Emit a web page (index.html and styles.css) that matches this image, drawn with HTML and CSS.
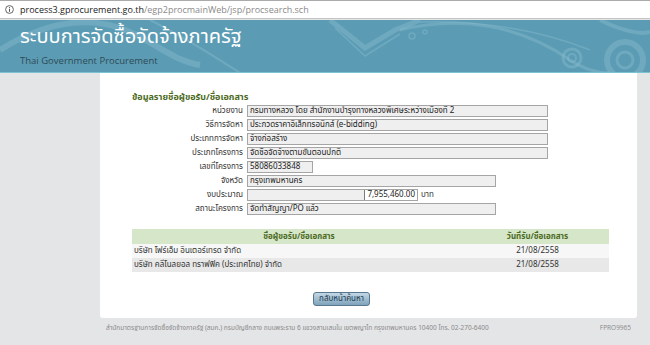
FILE: index.html
```html
<!DOCTYPE html>
<html lang="th">
<head>
    <meta charset="UTF-8">
    <title>ระบบการจัดซื้อจัดจ้างภาครัฐ</title>
    <link rel="stylesheet" href="styles.css">
</head>
<body>

    <div class="urlbar">
        <svg class="info-icon" width="9" height="9" viewBox="0 0 9 9">
            <circle cx="4.5" cy="4.5" r="3.9" fill="none" stroke="#555" stroke-width="0.9"/>
            <rect x="4" y="3.8" width="1" height="3" fill="#555"/>
            <rect x="4" y="2.1" width="1" height="1" fill="#555"/>
        </svg>
        <span class="url-host">process3.gprocurement.go.th</span><span class="url-path">/egp2procmainWeb/jsp/procsearch.sch</span>
    </div>

    <div class="header">
        <svg class="header-pattern" width="650" height="53" viewBox="0 0 650 53">
            <g fill="none" stroke="#8cbfd0" stroke-opacity="0.4">
                <path d="M0 30 C40 5 80 -5 120 8 C150 18 170 40 200 45" stroke-width="6"/>
                <path d="M150 0 C190 20 220 40 240 53" stroke-width="2"/>
                <path d="M330 0 L365 28 L395 10 L420 0" stroke-width="5"/>
                <path d="M335 8 L365 36 L400 14" stroke-width="1.5"/>
                <path d="M400 10 C460 -5 520 5 570 40 C585 50 600 53 610 53" stroke-width="3"/>
                <path d="M420 2 C480 0 540 10 590 30" stroke-width="1.5"/>
                <circle cx="572" cy="38" r="9" stroke-width="3"/>
                <circle cx="572" cy="38" r="4" stroke-width="2"/>
                <circle cx="625" cy="40" r="18" stroke-width="6"/>
                <circle cx="625" cy="40" r="8" stroke-width="3"/>
                <path d="M600 0 C620 10 640 15 650 12" stroke-width="4"/>
                <circle cx="412" cy="16" r="3" stroke-width="1.5"/>
                <circle cx="425" cy="12" r="2" stroke-width="1.5"/>
            </g>
        </svg>
        <div class="header-title">ระบบการจัดซื้อจัดจ้างภาครัฐ</div>
        <div class="header-sub">Thai Government Procurement</div>
    </div>

    <div class="panel">
        <div class="section-title">ข้อมูลรายชื่อผู้ขอรับ/ชื่อเอกสาร</div>

        <div class="form">
            <div class="label">หน่วยงาน</div>
            <div class="value"><span class="field field-wide">กรมทางหลวง โดย สำนักงานบำรุงทางหลวงพิเศษระหว่างเมืองที่ 2</span></div>

            <div class="label">วิธีการจัดหา</div>
            <div class="value"><span class="field field-wide">ประกวดราคาอิเล็กทรอนิกส์ (e-bidding)</span></div>

            <div class="label">ประเภทการจัดหา</div>
            <div class="value"><span class="field field-wide">จ้างก่อสร้าง</span></div>

            <div class="label">ประเภทโครงการ</div>
            <div class="value"><span class="field field-wide">จัดซื้อจัดจ้างตามขั้นตอนปกติ</span></div>

            <div class="label">เลขที่โครงการ</div>
            <div class="value"><span class="field field-short">58086033848</span></div>

            <div class="label">จังหวัด</div>
            <div class="value"><span class="field field-mid">กรุงเทพมหานคร</span></div>

            <div class="label">งบประมาณ</div>
            <div class="value"><span class="field field-money"><span class="money-pad"></span><span class="money">7,955,460.00</span></span><span class="unit">บาท</span></div>

            <div class="label">สถานะโครงการ</div>
            <div class="value"><span class="field field-mid">จัดทำสัญญา/PO แล้ว</span></div>
        </div>

        <table class="result">
            <thead>
                <tr>
                    <th class="col-name">ชื่อผู้ขอรับ/ชื่อเอกสาร</th>
                    <th class="col-date">วันที่รับ/ชื่อเอกสาร</th>
                </tr>
            </thead>
            <tbody>
                <tr class="row-odd">
                    <td>บริษัท โฟร์เอ็ม อินเตอร์เทรด จำกัด</td>
                    <td class="date">21/08/2558</td>
                </tr>
                <tr class="row-even">
                    <td>บริษัท คลีโนลยอล ทราฟฟิค (ประเทศไทย) จำกัด</td>
                    <td class="date">21/08/2558</td>
                </tr>
            </tbody>
        </table>

        <div class="actions">
            <button class="btn-back">กลับหน้าค้นหา</button>
        </div>
    </div>

    <div class="footer">
        <span>สำนักมาตรฐานการจัดซื้อจัดจ้างภาครัฐ (สมก.) กรมบัญชีกลาง ถนนพระราม 6 แขวงสามเสนใน เขตพญาไท กรุงเทพมหานคร 10400 โทร. 02-270-6400</span>
        <span class="footer-code">FPRO9965</span>
    </div>

</body>
</html>
```

FILE: styles.css
```css
* {
    box-sizing: border-box;
}

html, body {
    margin: 0;
    height: 100%;
}

body {
    background: #e4e5e7;
    font-family: Tahoma, "Noto Sans Thai", "Noto Sans", "DejaVu Sans", sans-serif;
    font-size: 8px;
    color: #333;
    overflow: hidden;
}

/*--------------------
Browser bar
--------------------*/
.urlbar {
    height: 19px;
    background: #fff;
    border-top: 1px solid #aaa;
    border-bottom: 1px solid #c4c4c4;
    display: flex;
    align-items: center;
    padding-left: 5px;
    font-family: "Open Sans", sans-serif;
    font-size: 9px;
}

.info-icon {
    margin-right: 6px;
}

.url-host {
    color: #222;
}

.url-path {
    color: #8a8a8a;
}

/*--------------------
Header
--------------------*/
.header {
    position: relative;
    margin-top: 1px;
    height: 53px;
    background: #5b9cb4;
    border-bottom: 1px solid #7cc3d2;
    overflow: hidden;
    padding: 4px 0 0 20px;
}

.header-pattern {
    position: absolute;
    top: 0;
    left: 0;
}

.header-title {
    position: relative;
    color: #fff;
    font-size: 20px;
    line-height: 26px;
}

.header-sub {
    position: relative;
    color: #2e4a56;
    font-family: "Open Sans", sans-serif;
    font-size: 9.5px;
    margin-top: 4px;
}

/*--------------------
Panel
--------------------*/
.panel {
    margin-left: 100px;
    width: 537px;
    height: 245px;
    background: #fff;
    border-radius: 0 0 3px 3px;
    padding: 17px 0 0 32px;
}

.section-title {
    color: #4b6a22;
    font-weight: bold;
    font-size: 9px;
    margin-bottom: 1px;
}

.form {
    display: grid;
    grid-template-columns: 111px 1fr;
    column-gap: 4px;
    row-gap: 2px;
}

.label {
    text-align: right;
    line-height: 12px;
}

.value {
    display: flex;
    align-items: center;
}

.field {
    display: inline-block;
    height: 12px;
    line-height: 10px;
    background: #efefef;
    border: 1px solid #a5a5a5;
    padding: 0 2px;
    color: #222;
    white-space: nowrap;
    overflow: hidden;
}

.field-wide {
    width: 301px;
}

.field-short {
    width: 66px;
}

.field-mid {
    width: 249px;
}

.field-money {
    width: 171px;
    display: flex;
    padding: 0;
}

.money-pad {
    flex: 1;
}

.money {
    background: #fff;
    border-left: 1px solid #7b7b7b;
    padding: 0 2px;
}

.unit {
    margin-left: 3px;
}

/*--------------------
Result table
--------------------*/
.result {
    margin-top: 14px;
    width: 477px;
    border-collapse: collapse;
}

.result th {
    background: #d6e6c9;
    color: #4b6a22;
    font-weight: bold;
    height: 15px;
    padding: 0;
}

.result td {
    height: 14px;
    padding: 0 2px;
}

.col-name {
    width: 334px;
}

.result td.date {
    text-align: center;
}

.row-odd td {
    background: #f7f7f7;
}

.row-even td {
    background: #e8e8e8;
}

.actions {
    display: flex;
    justify-content: center;
    margin-top: 20px;
    padding-right: 86px;
}

.btn-back {
    font-family: inherit;
    font-size: 8px;
    color: #1d3c52;
    height: 14px;
    padding: 0 5px;
    border: 1px solid #56778d;
    border-radius: 3px;
    background: linear-gradient(#c3d8e6, #7fa3bb);
}

/*--------------------
Footer
--------------------*/
.footer {
    display: flex;
    justify-content: space-between;
    margin-left: 106px;
    width: 525px;
    padding-top: 5px;
    color: #8a8a8a;
    font-size: 6.5px;
}

.footer-code {
    font-family: "Open Sans", sans-serif;
}
```
